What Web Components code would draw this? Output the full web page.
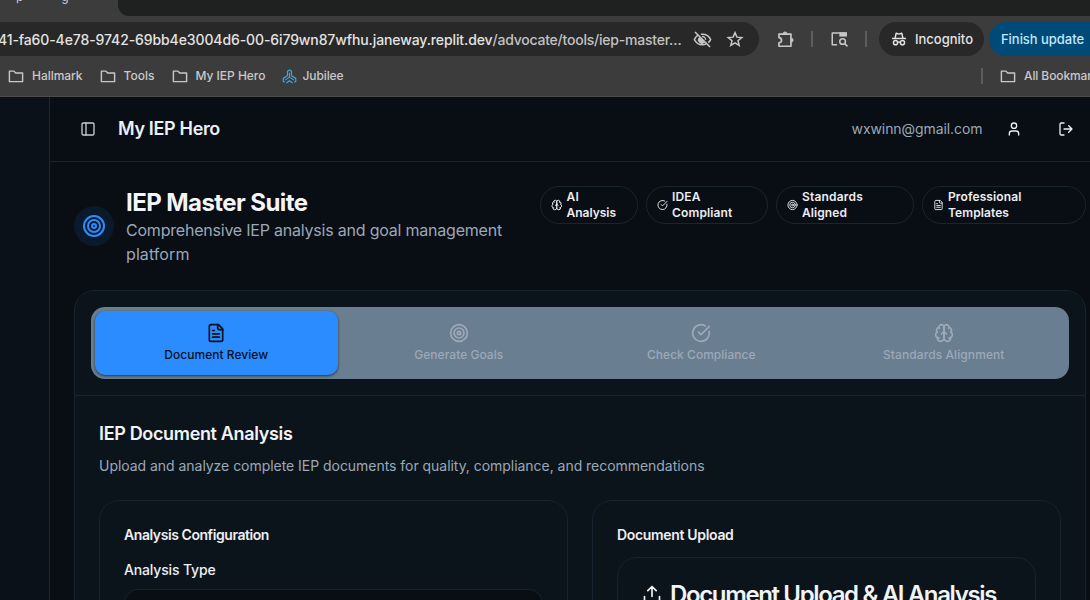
<!DOCTYPE html>
<html lang="en">
<head>
<meta charset="utf-8">
<title>My IEP Hero</title>
<style>
html,body{margin:0;height:600px;overflow:hidden;background:#090d14}
body{font-family:Inter,"Liberation Sans",sans-serif}
</style>
</head>
<body>
<browser-chrome></browser-chrome>
<hero-app></hero-app>
<script>
const ICONS={
 folder:'<path d="M3.2 5.5h6l2.3 2.6h9.3v11.4H3.2z" fill="none" stroke-width="1.9"/>',
 jubilee:'<path d="M8.800 10.800V3.500L12 1.500l3.200 2v7.300M12 6v7M8.800 10.800 2 15v5l2.500 1.300M15.200 10.800 22 15v5l-2.500 1.300M12 13l-7 4.800M12 13l7 4.800M7 22.500l5-3.800 5 3.800" stroke-width="1.9"/>',
 eyeoff:'<path d="M2.500 2.500l19 19" stroke-width="2"/><path d="M6 6.800C4.200 8 2.700 9.800 1.700 12c1.900 4.100 5.700 6.700 10.300 6.700 1.600 0 3.100-.3 4.500-.9M10 5.500c.7-.1 1.300-.2 2-.2 4.600 0 8.400 2.600 10.300 6.700-.7 1.500-1.700 2.900-3 4" stroke-width="2"/><path d="M7.800 9.500A4.500 4.500 0 0 0 14.600 15.500z" fill="currentColor" stroke-width="1"/><path d="M11.500 8.200a4 4 0 0 1 4.400 4.300" stroke-width="1.700"/>',
 star:'<path d="M12 3.500l2.500 6 6.500.5-5 4.200 1.600 6.300-5.600-3.400-5.600 3.400L8 14.200 3 10l6.500-.5z" stroke-width="2" stroke-linejoin="miter"/>',
 puzzle:'<path d="M3.700 5.200h15.200v15.300H3.700v-4.400c4.400-.3 4.400-6.200 0-6.500z" stroke-width="2.100"/><path d="M8.800 5a2.600 2.600 0 0 1 5.200 0zM19 10.200a2.600 2.600 0 0 1 0 5.200z" fill="currentColor" stroke-width="1"/>',
 tabsearch:'<path d="M9.500 19.500H3V4h18.500v4" stroke-width="2"/><path d="M12.500 3.200h10v5.600h-10z" fill="currentColor" stroke="none"/><circle cx="16.800" cy="15.300" r="3.800" stroke-width="2"/><path d="M19.500 18l3.800 3.800" stroke-width="2.200"/>',
 incog:'<path d="M1.500 11.200h21" stroke-width="2.200"/><path d="M6.200 10.500 7.800 3.300l4.200 1.400 4.200-1.400 1.600 7.200" stroke-width="2.200"/><circle cx="6.800" cy="17.500" r="3.100" stroke-width="2.200"/><circle cx="17.200" cy="17.500" r="3.100" stroke-width="2.200"/><path d="M10 17q2-1.400 4 0" stroke-width="2"/>',
 panel:'<rect x="3" y="3" width="18" height="18" rx="2"/><path d="M9 3v18"/>',
 user:'<path d="M19 21v-2a4 4 0 0 0-4-4H9a4 4 0 0 0-4 4v2"/><circle cx="12" cy="7" r="4"/>',
 logout:'<path d="M9 21H5a2 2 0 0 1-2-2V5a2 2 0 0 1 2-2h4M16 17l5-5-5-5M21 12H9"/>',
 target:'<circle cx="12" cy="12" r="10"/><circle cx="12" cy="12" r="6"/><circle cx="12" cy="12" r="2"/>',
 check:'<path d="M21.801 10A10 10 0 1 1 17 3.335"/><path d="m9 11 3 3L22 4"/>',
 file:'<path d="M15 2H6a2 2 0 0 0-2 2v16a2 2 0 0 0 2 2h12a2 2 0 0 0 2-2V7Z"/><path d="M14 2v4a2 2 0 0 0 2 2h4M10 9H8M16 13H8M16 17H8"/>',
 brain:'<path d="M12 5a3 3 0 1 0-5.997.125 4 4 0 0 0-2.526 5.770 4 4 0 0 0 .556 6.588A4 4 0 1 0 12 18Z"/><path d="M12 5a3 3 0 1 1 5.997.125 4 4 0 0 1 2.526 5.770 4 4 0 0 1-.556 6.588A4 4 0 1 1 12 18Z"/><path d="M15 13a4.500 4.500 0 0 1-3-4 4.500 4.500 0 0 1-3 4M17.599 6.500a3 3 0 0 0 .399-1.375M6.003 5.125A3 3 0 0 0 6.401 6.500M3.477 10.896a4 4 0 0 1 .585-.396M19.938 10.500a4 4 0 0 1 .585.396M6 18a4 4 0 0 1-1.967-.516M19.967 17.484A4 4 0 0 1 18 18"/>',
 upload:'<path d="M21 15v4a2 2 0 0 1-2 2H5a2 2 0 0 1-2-2v-4M17 8l-5-5-5 5M12 3v12"/>'
};
class Base extends HTMLElement{
  constructor(){super();this.attachShadow({mode:'open'})}
  connectedCallback(){ if(!this.shadowRoot.firstChild){const t=document.createElement('template');t.innerHTML=this.view();this.shadowRoot.append(t.content.cloneNode(true))} }
  a(n,d){return this.getAttribute(n)??d}
}
class UiIcon extends Base{
  view(){const s=this.a('size','16'),w=this.a('w',s);return `<style>:host{display:block;flex:none;width:${w}px;height:${s}px}svg{display:block;width:100%;height:100%}</style>
  <svg viewBox="0 0 24 24" fill="none" stroke="currentColor" stroke-width="2" stroke-linecap="${this.hasAttribute('butt')?'butt':'round'}" stroke-linejoin="round">${ICONS[this.a('name')]}</svg>`}
}
/* A line of text tracked so that its advance equals the w attribute. */
class UiText extends Base{
  view(){return `<style>:host{display:block;white-space:nowrap;flex:none}span{display:inline-block}</style><span><slot></slot></span>`}
  connectedCallback(){super.connectedCallback();
    const s=this.shadowRoot.querySelector('span'),w=+this.a('w',0);
    if(w)s.style.letterSpacing=((w-s.getBoundingClientRect().width)/this.textContent.length).toFixed(4)+'px';}
}
class BookmarkItem extends Base{
  view(){const j=this.a('icon')==='jubilee';return `<style>:host{display:flex;align-items:center;gap:${j?6:7}px;color:#c9c9c9;font-size:12px;line-height:16px;font-weight:500;flex:none}ui-icon{color:var(--ic,#c7c7c7)}</style><ui-icon name="${this.a('icon','folder')}" size="${j?15:18}" butt></ui-icon><slot></slot>`}
}
class BrowserChrome extends Base{
  view(){return `<style>
  :host{display:flex;flex-direction:column;height:97px;box-sizing:border-box;background:#3c3c3c;border-bottom:1px solid #4b4b4b;overflow:hidden;width:1090px}
  .tabs{height:16px;display:flex;overflow:hidden;flex:none}
  .tab{width:118px;display:flex;gap:38px;padding-left:16px;box-sizing:border-box;color:#ccc;font-size:12px;line-height:16px}
  .tab span{margin-top:-11px}
  .rest{flex:1;background:#1f2120;border-bottom-left-radius:11px;}
  .bar{margin-top:6px;height:34px;display:flex;align-items:center;flex:none;color:#c7c7c7}
  .omni{width:759px;height:34px;flex:none;border-radius:0 17px 17px 0;background:#282828;display:flex;align-items:center;box-sizing:border-box;font-size:14px;font-weight:450}
  .omni .h{color:#e3e3e3;margin-left:-2px}.omni .p{color:#c2c2c2}
  .eye{margin-left:11.500px}.star{margin-left:13.500px}
  .sep{width:2px;height:16px;background:#5d5d5d;flex:none}
  .inc{margin-left:12px;width:105px;height:34px;border-radius:17px;background:#282828;display:flex;align-items:center;gap:8px;padding-left:12px;box-sizing:border-box;font-size:13px;font-weight:500;color:#e3e3e3;flex:none}
  .upd{margin-left:5px;width:130px;height:34px;border-radius:17px;background:#004a77;color:#c2e7ff;display:flex;align-items:center;padding-left:12px;box-sizing:border-box;font-size:13px;font-weight:500;flex:none}
  .marks{height:40px;display:flex;align-items:center;padding-left:7px;gap:16px;width:1200px;box-sizing:border-box}
  .marks .sep{margin-left:auto}
  </style>
  <div class="tabs"><div class="tab"><span>p</span><span>g</span></div><div class="rest"></div></div>
  <div class="bar">
   <div class="omni"><ui-text class="h" w="494.500">41-fa60-4e78-9742-69bb4e3004d6-00-6i79wn87wfhu.janeway.replit.dev</ui-text><ui-text class="p" w="189">/advocate/tools/iep-master…</ui-text><ui-icon class="eye" name="eyeoff" size="19" butt></ui-icon><ui-icon class="star" name="star" size="18" butt></ui-icon></div>
   <ui-icon style="margin-left:17px" name="puzzle" size="19" butt></ui-icon><div class="sep" style="margin-left:16px"></div>
   <ui-icon style="margin-left:17px" name="tabsearch" size="18" butt></ui-icon><div class="sep" style="margin-left:17px"></div>
   <div class="inc"><ui-icon name="incog" size="16" butt></ui-icon><ui-text w="58">Incognito</ui-text></div>
   <div class="upd"><ui-text w="83">Finish update</ui-text></div>
  </div>
  <div class="marks">
   <bookmark-item><ui-text w="50.500">Hallmark</ui-text></bookmark-item>
   <bookmark-item><ui-text w="31">Tools</ui-text></bookmark-item>
   <bookmark-item><ui-text w="70">My IEP Hero</ui-text></bookmark-item>
   <bookmark-item icon="jubilee" style="--ic:#3fa5dc"><ui-text w="41">Jubilee</ui-text></bookmark-item>
   <div class="sep"></div><bookmark-item style="width:201px"><ui-text w="81">All Bookmarks</ui-text></bookmark-item>
  </div>`}
}
class FeatureBadge extends Base{
  view(){return `<style>:host{display:flex;align-items:center;gap:4px;box-sizing:border-box;height:38px;width:${this.a('width')}px;border:1px solid #182632;border-radius:19px;padding:2px 10px;font-size:12px;line-height:16px;font-weight:600;color:#eceef1;flex:none}</style>
  <ui-icon name="${this.a('icon')}" size="12" w="${this.a('iw','11')}"></ui-icon><div><slot></slot></div>`}
}
class SuiteTab extends Base{
  view(){return `<style>:host{display:flex;flex-direction:column;align-items:center;justify-content:center;gap:4px;flex:1;border-radius:10px;font-size:12px;line-height:16px;font-weight:500;color:#9ba9b8}
  :host([active]){background:#2b8cff;color:#0a1018;box-shadow:0 1px 3px #0006,0 1px 2px #0004}</style>
  <ui-icon name="${this.a('icon')}" size="20"></ui-icon><slot></slot>`}
}
class UiCard extends Base{
  view(){return `<style>:host{display:block;box-sizing:border-box;border:1px solid #152430;border-radius:20px;background:#0c141b}</style><slot></slot>`}
}
class HeroHeader extends Base{
  view(){return `<style>:host{display:flex;align-items:center;height:65px;box-sizing:border-box;border-bottom:1px solid #182632;padding:0 36px 0 30px;color:#eceff3}
  .t{font-size:18px;line-height:24px;font-weight:600;margin-left:22px;margin-top:-1px}.m{margin-left:auto;font-size:14px;line-height:20px;color:#9ba8b7;margin-right:23.500px;margin-top:-1px}.o{margin-left:36px}.p{color:#c8cbd0}</style>
  <ui-icon class="p" name="panel"></ui-icon><ui-text class="t" w="102">My IEP Hero</ui-text><ui-text class="m" w="131">wxwinn@gmail.com</ui-text><ui-icon name="user"></ui-icon><ui-icon class="o" name="logout"></ui-icon>`}
}
class AnalysisPanel extends Base{
  view(){return `<style>:host{display:block;padding:24px}
  h2{margin:0;font-size:18px;line-height:28px;font-weight:600;color:#f1f3f5}
  .s{font-size:14px;line-height:20px;color:#9ba8b7;margin-top:8px}
  .g{display:grid;grid-template-columns:1fr 1fr;gap:24px;margin-top:24px}
  .c{height:300px;padding:24px}
  .h,.l{font-size:14px;line-height:20px;color:#eceff3;font-weight:600}
  .l{font-weight:500;margin-top:15px}
  .in{margin-top:9px;height:40px;border:1px solid #152430;border-radius:14px;background:#090d14}
  .u{margin-top:12px;padding:24px;height:200px;color:#f1f3f5;font-size:24px;line-height:26px;font-weight:600}
  .row{display:flex;gap:8px}
  .u ui-icon{margin-top:2px}</style>
  <h2><ui-text w="193.500">IEP Document Analysis</ui-text></h2>
  <ui-text class="s" w="605.500">Upload and analyze complete IEP documents for quality, compliance, and recommendations</ui-text>
  <div class="g"><ui-card class="c"><ui-text class="h" w="145">Analysis Configuration</ui-text><ui-text class="l" w="91.500">Analysis Type</ui-text><div class="in"></div></ui-card>
  <ui-card class="c"><ui-text class="h" w="116.500">Document Upload</ui-text><ui-card class="u"><div class="row"><ui-icon name="upload" size="20"></ui-icon><ui-text w="326">Document Upload &amp; AI Analysis</ui-text></div></ui-card></ui-card></div>`}
}
class HeroApp extends Base{
  view(){return `<style>:host{display:grid;grid-template-columns:50px 1060px;width:1110px;height:503px;overflow:hidden}
  aside{background:#0a1118;border-right:1px solid #182632}
  main{padding:24px}
  .top{display:flex;align-items:flex-start;height:80px;margin-bottom:24px}
  .ic{width:40px;height:40px;border-radius:50%;background:#0b1a2a;color:#2b8cff;display:grid;place-items:center;margin-top:20px;flex:none}
  .tt{margin-left:12px;width:414px;flex:none;color:#9ba8b7;font-size:16px;line-height:24px}
  h1{margin:0;font-size:24px;line-height:33px;height:32px;font-weight:700;color:#f3f5f8}
  .b{display:flex;gap:8px}
  .tabs{margin:16px;height:72px;padding:4px;box-sizing:border-box;display:flex;background:#6a7e91;border-radius:14px}
  .main{height:500px;overflow:hidden}
  .line{height:1px;background:#152430}</style>
  <aside></aside><div><hero-header></hero-header><main>
   <div class="top"><div class="ic"><ui-icon name="target" size="24"></ui-icon></div>
    <div class="tt"><h1><ui-text w="181.500">IEP Master Suite</ui-text></h1><ui-text w="376">Comprehensive IEP analysis and goal management</ui-text><ui-text w="63.500">platform</ui-text></div>
    <div class="b">
     <feature-badge icon="brain" width="98" iw="11.500"><ui-text w="12.500">AI</ui-text><ui-text w="49.500">Analysis</ui-text></feature-badge>
     <feature-badge icon="check" width="122"><ui-text w="28.500">IDEA</ui-text><ui-text w="60.500">Compliant</ui-text></feature-badge>
     <feature-badge icon="target" width="138"><ui-text w="61">Standards</ui-text><ui-text w="45">Aligned</ui-text></feature-badge>
     <feature-badge icon="file" width="164"><ui-text w="73.500">Professional</ui-text><ui-text w="61">Templates</ui-text></feature-badge>
    </div></div>
   <ui-card class="main"><div class="tabs">
     <suite-tab icon="file" active><ui-text w="104">Document Review</ui-text></suite-tab>
     <suite-tab icon="target"><ui-text w="89">Generate Goals</ui-text></suite-tab>
     <suite-tab icon="check"><ui-text w="108.500">Check Compliance</ui-text></suite-tab>
     <suite-tab icon="brain"><ui-text w="121.500">Standards Alignment</ui-text></suite-tab>
    </div><div class="line"></div><analysis-panel></analysis-panel></ui-card>
  </main></div>`}
}
for(const [n,c] of Object.entries({'browser-chrome':BrowserChrome,'hero-app':HeroApp,'hero-header':HeroHeader,'analysis-panel':AnalysisPanel,'ui-card':UiCard,'suite-tab':SuiteTab,'feature-badge':FeatureBadge,'bookmark-item':BookmarkItem,'ui-icon':UiIcon,'ui-text':UiText}))customElements.define(n,c);
</script>
</body>
</html>
